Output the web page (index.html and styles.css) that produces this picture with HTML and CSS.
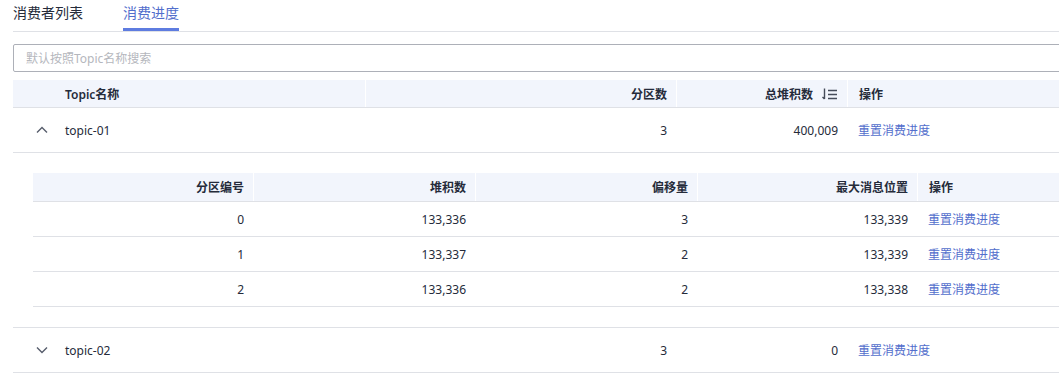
FILE: index.html
```html
<!DOCTYPE html>
<html lang="zh-CN">
<head>
<meta charset="utf-8">
<title>消费进度</title>
<link rel="stylesheet" href="styles.css">
</head>
<body>
<div class="page">
  <div class="tabs">
    <div class="tab">消费者列表</div>
    <div class="tab active">消费进度</div>
  </div>
  <div class="search"><input class="search-input" type="text" placeholder="默认按照Topic名称搜索"></div>

  <div class="table">
    <div class="row head">
      <div class="cell c-name th">Topic名称</div>
      <div class="cell num th sep">分区数</div>
      <div class="cell num th sep">总堆积数
        <svg class="sort" width="16" height="12" viewBox="0 0 16 12"><path d="M2.5 0.5V11M2.5 11L0.5 9" fill="none" stroke="#464c5a" stroke-width="1.4"/><path d="M6 2.5H15M6 6.5H15M6 10.5H15" stroke="#464c5a" stroke-width="1.5"/></svg>
      </div>
      <div class="cell th sep op">操作</div>
    </div>

    <div class="row body">
      <div class="cell c-name"><svg class="chev" width="12" height="8" viewBox="0 0 12 8"><path d="M1 6.5L6 1.5L11 6.5" fill="none" stroke="#575d6c" stroke-width="1.4"/></svg><span>topic-01</span></div>
      <div class="cell num">3</div>
      <div class="cell num">400,009</div>
      <div class="cell op"><a class="link">重置消费进度</a></div>
    </div>

    <div class="expand">
      <div class="sub">
        <div class="srow shead">
          <div class="cell num th">分区编号</div>
          <div class="cell num th sep">堆积数</div>
          <div class="cell num th sep">偏移量</div>
          <div class="cell num th sep">最大消息位置</div>
          <div class="cell th sep op">操作</div>
        </div>
        <div class="srow sbody">
          <div class="cell num">0</div>
          <div class="cell num">133,336</div>
          <div class="cell num">3</div>
          <div class="cell num">133,339</div>
          <div class="cell op"><a class="link">重置消费进度</a></div>
        </div>
        <div class="srow sbody">
          <div class="cell num">1</div>
          <div class="cell num">133,337</div>
          <div class="cell num">2</div>
          <div class="cell num">133,339</div>
          <div class="cell op"><a class="link">重置消费进度</a></div>
        </div>
        <div class="srow sbody">
          <div class="cell num">2</div>
          <div class="cell num">133,336</div>
          <div class="cell num">2</div>
          <div class="cell num">133,338</div>
          <div class="cell op"><a class="link">重置消费进度</a></div>
        </div>
      </div>
    </div>

    <div class="row body">
      <div class="cell c-name"><svg class="chev" width="12" height="8" viewBox="0 0 12 8"><path d="M1 1.5L6 6.5L11 1.5" fill="none" stroke="#575d6c" stroke-width="1.4"/></svg><span>topic-02</span></div>
      <div class="cell num">3</div>
      <div class="cell num">0</div>
      <div class="cell op"><a class="link">重置消费进度</a></div>
    </div>
  </div>
</div>
</body>
</html>
```

FILE: styles.css
```css
html, body {
  margin: 0;
  padding: 0;
  background: #fff;
  overflow: hidden;
}
body {
  font-family: "Noto Sans", "Noto Sans CJK SC", sans-serif;
  font-size: 12px;
  color: #252b3a;
}
.page {
  width: 1110px;
  padding-left: 13px;
}
.tabs {
  display: flex;
  gap: 40px;
  height: 31px;
  border-bottom: 1px solid #dfe1e6;
}
.tab {
  font-size: 14px;
  line-height: 25px;
  height: 28px;
  color: #252b3a;
  box-sizing: border-box;
}
.tab.active {
  color: #526ecc;
  border-bottom: 3px solid #5e7ce0;
  height: 31px;
}
.search {
  margin-top: 12px;
}
.search-input {
  display: block;
  box-sizing: border-box;
  width: 100%;
  height: 28px;
  border: 1px solid #adb0b8;
  border-radius: 2px;
  padding: 0 12px;
  font-family: inherit;
  font-size: 12px;
  color: #252b3a;
  outline: none;
}
.search-input::placeholder {
  color: #b5b7bd;
}
.table {
  margin-top: 8px;
}
.row {
  display: grid;
  grid-template-columns: 352px 311px 171px 263px;
  border-bottom: 1px solid #dfe1e6;
}
.row.head {
  background: #f2f5fc;
  height: 28px;
  box-sizing: border-box;
}
.row.body {
  height: 45px;
  box-sizing: border-box;
}
.cell {
  display: flex;
  align-items: center;
  padding: 0 9px 0 10px;
  white-space: nowrap;
  box-sizing: border-box;
}
.th {
  font-weight: 600;
}
.sep {
  border-left: 1px solid #fff;
}
.num {
  justify-content: flex-end;
}
.op {
  padding-left: 11px;
}
.c-name {
  padding-left: 52px;
}
.row.body .c-name {
  padding-left: 23px;
}
.chev {
  margin-right: 17px;
  flex: none;
}
.sort {
  margin-left: 9px;
  flex: none;
}
.link {
  color: #526ecc;
  cursor: pointer;
}
.expand {
  padding: 20px 0 20px 20px;
  border-bottom: 1px solid #dfe1e6;
}
.srow {
  display: grid;
  grid-template-columns: 220px 222px 222px 220px 200px;
  border-bottom: 1px solid #dfe1e6;
  box-sizing: border-box;
}
.srow.shead {
  background: #f2f5fc;
  height: 29px;
}
.srow.sbody {
  height: 35px;
}
```
